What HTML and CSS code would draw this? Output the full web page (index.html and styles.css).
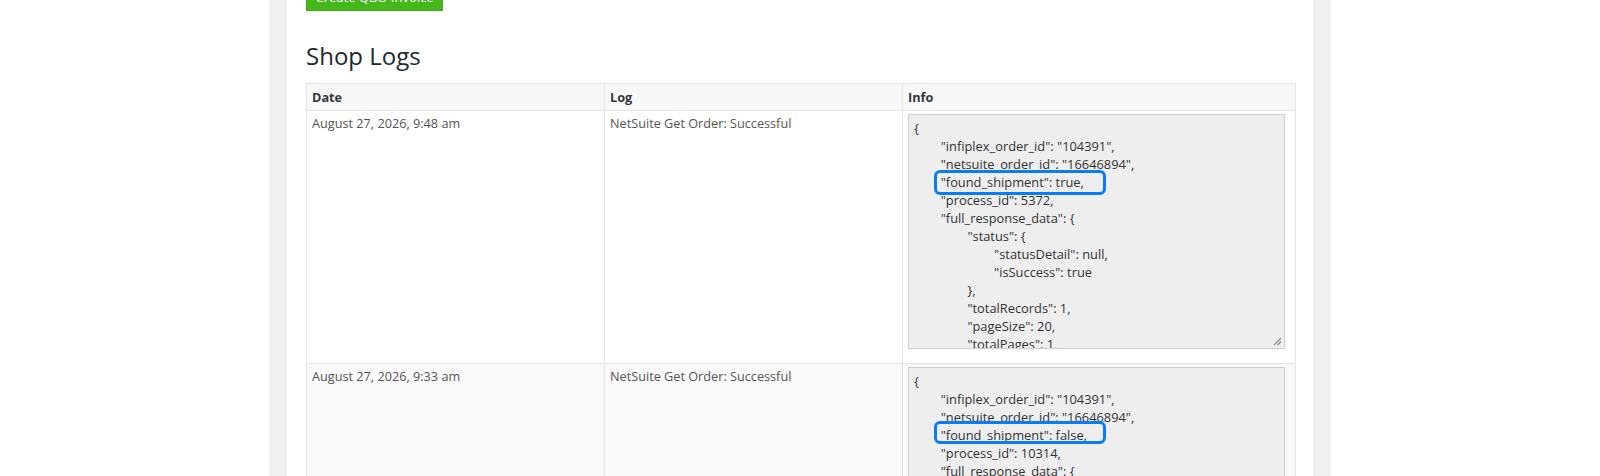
FILE: index.html
```html
<!DOCTYPE html>
<html lang="en">
<head>
<meta charset="utf-8">
<title>Shop Logs</title>
<link rel="stylesheet" href="styles.css">
</head>
<body>
<div class="frame">
  <div class="panel">
    <button class="btn-green" type="button">Create QBO Invoice</button>
    <h2 class="title">Shop Logs</h2>
    <table class="logs">
      <colgroup>
        <col class="c-date">
        <col class="c-log">
        <col class="c-info">
      </colgroup>
      <thead>
        <tr><th>Date</th><th>Log</th><th>Info</th></tr>
      </thead>
      <tbody>
        <tr class="odd">
          <td>August 27, 2026, 9:48 am</td>
          <td>NetSuite Get Order: Successful</td>
          <td>
            <div class="json-box">
<div class="json">{
	"infiplex_order_id": "104391",
	"netsuite_order_id": "16646894",
	"found_shipment": true,
	"process_id": 5372,
	"full_response_data": {
		"status": {
			"statusDetail": null,
			"isSuccess": true
		},
		"totalRecords": 1,
		"pageSize": 20,
		"totalPages": 1,
		"pageIndex": 1,
		"searchId": null
	}
}</div>
              <span class="hl hl-1"></span>
              <svg class="grip" width="10" height="10" viewBox="0 0 10 10"><path d="M9 2 L2 9 M9 5.5 L5.5 9" stroke="#8a8a8a" stroke-width="1.2" fill="none"/></svg>
            </div>
          </td>
        </tr>
        <tr class="even">
          <td>August 27, 2026, 9:33 am</td>
          <td>NetSuite Get Order: Successful</td>
          <td>
            <div class="json-box">
<div class="json">{
	"infiplex_order_id": "104391",
	"netsuite_order_id": "16646894",
	"found_shipment": false,
	"process_id": 10314,
	"full_response_data": {
		"status": {
			"statusDetail": null,
			"isSuccess": true
		},
		"totalRecords": 1,
		"pageSize": 20,
		"totalPages": 1
	}
}</div>
              <span class="hl hl-2"></span>
            </div>
          </td>
        </tr>
      </tbody>
    </table>
  </div>
</div>
</body>
</html>
```
FILE: styles.css
```css
html, body {
  margin: 0;
  padding: 0;
  background: #ffffff;
  height: 476px;
  overflow: hidden;
}
body {
  font-family: "Open Sans", "Liberation Sans", sans-serif;
  font-size: 13px;
  line-height: 18px;
  color: #555;
}
.frame {
  width: 1030px;
  margin: -40px auto 0;
  padding: 0 16px;
  background: #f0f0f0;
  min-height: 600px;
}
.panel {
  background: #ffffff;
  border: 1px solid #e1e1e1;
  min-height: 600px;
  padding: 23px 19px 0 20px;
}
.btn-green {
  display: block;
  height: 27px;
  width: 137px;
  padding: 0;
  margin: 0;
  background: #46b71b;
  border: 1px solid #3fae14;
  border-radius: 0;
  color: #ffffff;
  font-family: "Open Sans", "Liberation Sans", sans-serif;
  font-size: 13px;
  line-height: 25px;
  text-align: center;
}
.title {
  margin: 29px 0 11px;
  font-size: 24px;
  line-height: 32px;
  font-weight: 400;
  color: #23282d;
}
.logs {
  width: 989px;
  table-layout: fixed;
  border-collapse: collapse;
  border: 1px solid #e5e5e5;
  font-size: 12.7px;
}
.c-date { width: 298px; }
.c-log { width: 298px; }
.c-info { width: 393px; }
.logs th {
  text-align: left;
  font-weight: 700;
  color: #32373c;
  background: #f7f7f7;
  padding: 4px 6px 4px 5px;
  border: 1px solid #e5e5e5;
}
.logs td {
  vertical-align: top;
  padding: 3px 5px;
  border: 1px solid #e5e5e5;
}
.logs tr.odd td { background: #ffffff; }
.logs tr.even td { background: #f9f9f9; }
.json-box {
  position: relative;
  width: 377px;
  height: 235px;
  box-sizing: border-box;
  margin-bottom: 11px;
  background: #eeeeee;
  border: 1px solid #cfcfcf;
  overflow: hidden;
}
.json {
  padding: 4px 5px;
  font-size: 12.85px;
  white-space: pre;
  tab-size: 8;
  -moz-tab-size: 8;
  color: #333;
}
.hl {
  position: absolute;
  left: 25px;
  width: 172px;
  box-sizing: border-box;
  border: 3px solid #0a7cf5;
  border-radius: 6px;
}
.hl-1 { top: 55px; height: 25px; }
.hl-2 { top: 53px; height: 23px; }
.grip {
  position: absolute;
  right: 2px;
  bottom: 2px;
}
```
